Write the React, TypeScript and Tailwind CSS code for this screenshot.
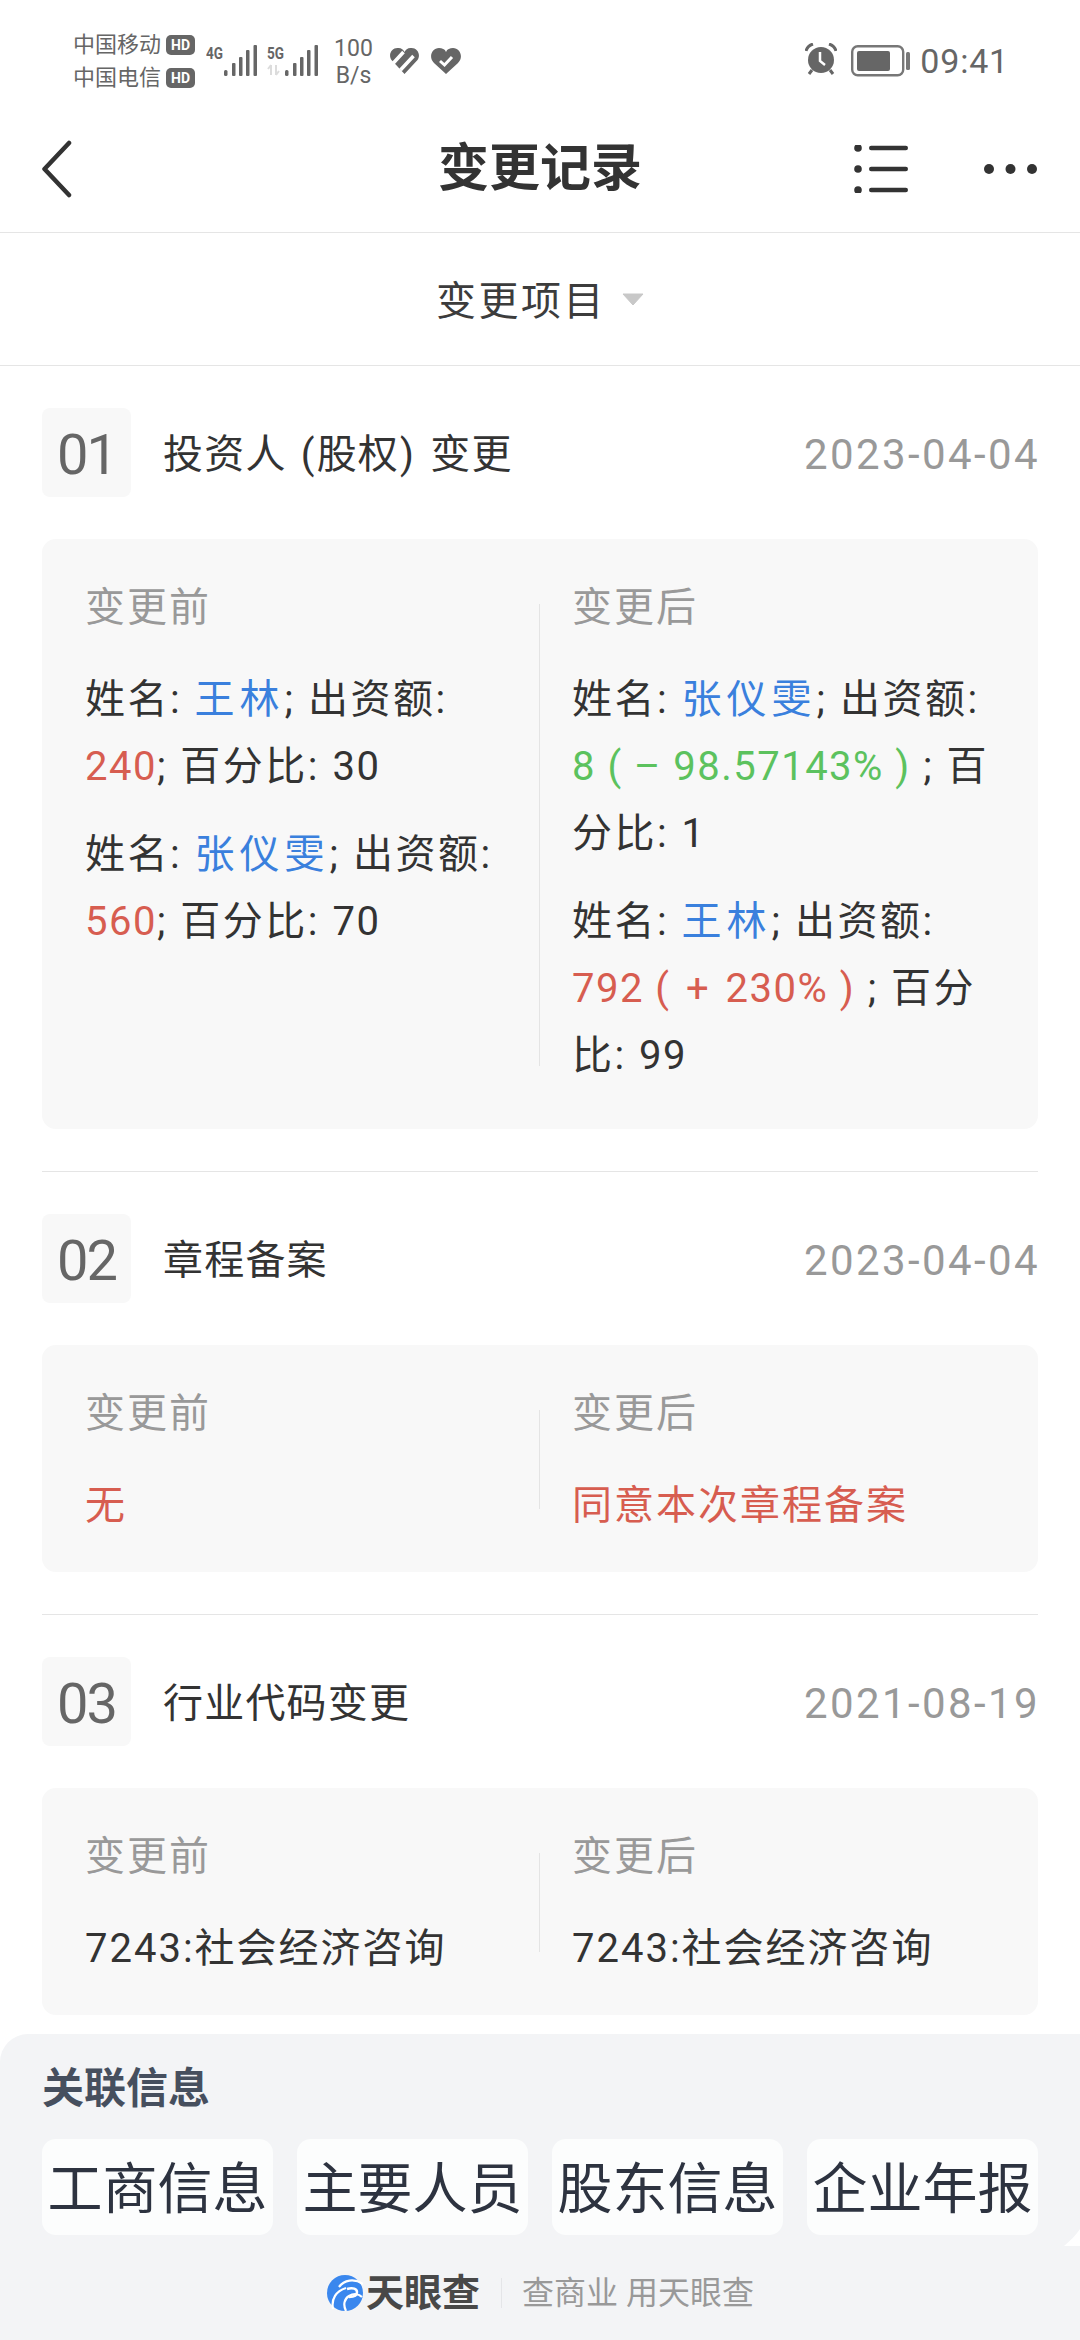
import type { ReactNode } from "react";

const Blue = ({ children }: { children: ReactNode }) => (
  <span className="text-[#3a80dd] tracking-[5px]">{children}</span>
);
const Red = ({ children }: { children: ReactNode }) => (
  <span className="text-[#d75d50] tracking-[1.5px]">{children}</span>
);
const Green = ({ children }: { children: ReactNode }) => (
  <span className="text-[#5cc25e] tracking-[1.5px]">{children}</span>
);
const Num = ({ children }: { children: ReactNode }) => (
  <span className="tracking-[1.5px]">{children}</span>
);

function Signal({ label, roaming }: { label: string; roaming?: boolean }) {
  return (
    <svg width="51" height="34" viewBox="0 0 51 34" className="shrink-0">
      <text x="0" y="16" fontSize="17" fontWeight="700" fill="#666" fontFamily="Roboto" textLength="17" lengthAdjust="spacingAndGlyphs">
        {label}
      </text>
      {roaming && (
        <g stroke="#dcdcdc" strokeWidth="2" fill="none">
          <path d="M4 32V22M1 26l3-4" />
          <path d="M9 22v10M9 32l3-4" />
        </g>
      )}
      <g fill="#666">
        <rect x="18" y="27" width="3.5" height="6" rx="1.5" />
        <rect x="26" y="20" width="3.5" height="13" rx="1" />
        <rect x="33" y="14" width="3.5" height="19" rx="1" />
        <rect x="40" y="7" width="3.5" height="26" rx="1" />
        <rect x="47.5" y="2" width="3.5" height="31" rx="1" />
      </g>
    </svg>
  );
}

function StatusBar() {
  return (
    <div className="h-[105px] pt-[28px] pl-[73px] pr-[71px] flex items-start text-[#666]">
      <div className="w-[122px] shrink-0 text-[22px] leading-[33px]">
        {["中国移动", "中国电信"].map((name) => (
          <div key={name} className="flex items-center">
            <span className="w-[93px]">{name}</span>
            <span className="w-[29px] h-[20px] rounded-[5px] bg-[#666] text-white text-[14px] leading-[20px] font-bold text-center">
              HD
            </span>
          </div>
        ))}
      </div>
      <div className="ml-[11px] mt-[15px] flex gap-[10px]">
        <Signal label="4G" />
        <Signal label="5G" roaming />
      </div>
      <div className="ml-[15px] mt-[7px] w-[41px] text-[23px] leading-[27px] text-center shrink-0 whitespace-nowrap">
        <div>100</div>
        <div>B/s</div>
      </div>
      <svg width="31" height="28" viewBox="0 0 30 28" className="ml-[15px] mt-[19px] shrink-0">
        <path d="M15 27 2 13C-2 7 3 0 9 1c3 0 5 2 6 4 1-2 3-4 6-4 6-1 11 6 7 12Z" fill="#666" />
        <path d="M3 17 14 5M11 23 24 9" stroke="#fff" strokeWidth="3.5" fill="none" />
      </svg>
      <svg width="30" height="26" viewBox="0 0 30 26" className="ml-[11px] mt-[20px] shrink-0">
        <path d="M15 26 3 15C-3 9 1 0 8 0c3 0 6 1 7 4 1-3 4-4 7-4 7 0 11 9 5 15Z" fill="#666" />
        <path d="m9 13 4.5 4L21 9" stroke="#fff" strokeWidth="3" fill="none" />
      </svg>
      <div className="flex-1" />
      <svg width="32" height="32" viewBox="0 0 32 32" className="mt-[15px] shrink-0">
        <circle cx="16" cy="17" r="13" fill="#666" />
        <path d="M1 8c1-4 4-6 7-7M31 8c-1-4-4-6-7-7" stroke="#666" strokeWidth="3" fill="none" />
        <path d="m7 27-3 4M25 27l3 4" stroke="#666" strokeWidth="3" />
        <path d="M15 9v9l5 4" stroke="#fff" strokeWidth="2.5" fill="none" />
      </svg>
      <svg width="59" height="32" viewBox="0 0 59 32" className="ml-[14px] mt-[17px] shrink-0">
        <rect x="1.2" y="1.2" width="51" height="29" rx="5.5" fill="none" stroke="#777" strokeWidth="2.4" />
        <rect x="6" y="6" width="33" height="20" rx="2" fill="#666" />
        <rect x="55" y="7" width="4" height="18" rx="1.5" fill="#777" />
      </svg>
      <div className="ml-[10px] text-[34px] leading-[40px] mt-[13px] tracking-[0.8px] shrink-0">09:41</div>
    </div>
  );
}

function Header() {
  return (
    <div className="h-[128px] px-[42px] grid grid-cols-[1fr_auto_1fr] items-center border-b border-[#e5e5e5]">
      <svg width="30" height="58" viewBox="0 0 30 58">
        <path d="M27 3 2.5 29 27 55" fill="none" stroke="#333" strokeWidth="4.5" strokeLinecap="round" strokeLinejoin="round" />
      </svg>
      <h1 className="text-[51px] leading-[64px] font-bold text-[#333]">变更记录</h1>
      <div className="flex items-center justify-end gap-[76px] pr-[1px]">
        <svg width="54" height="48" viewBox="0 0 54 48">
          <g fill="#333">
            <circle cx="4" cy="3" r="3.8" />
            <circle cx="4" cy="24" r="3.8" />
            <circle cx="4" cy="45" r="3.8" />
            <rect x="15" y="0.8" width="39" height="4.5" rx="2.2" />
            <rect x="15" y="21.8" width="39" height="4.5" rx="2.2" />
            <rect x="15" y="42.8" width="39" height="4.5" rx="2.2" />
          </g>
        </svg>
        <svg width="53" height="12" viewBox="0 0 53 12">
          <g fill="#333">
            <circle cx="5" cy="6" r="5" />
            <circle cx="26.5" cy="6" r="5" />
            <circle cx="48" cy="6" r="5" />
          </g>
        </svg>
      </div>
    </div>
  );
}

function Para({ children }: { children: ReactNode }) {
  return <p className="text-[40px] leading-[67px] text-[#333] tracking-[2.5px]">{children}</p>;
}

function Record({
  no,
  title,
  date,
  before,
  after,
  tall,
  last,
}: {
  no: string;
  title: ReactNode;
  date: string;
  before: ReactNode;
  after: ReactNode;
  tall?: boolean;
  last?: boolean;
}) {
  return (
    <section className={last ? "mx-[42px] pt-[42px]" : "mx-[42px] pt-[42px] pb-[42px] border-b border-[#e5e5e5]"}>
      <div className="flex items-center h-[89px]">
        <div className="w-[89px] h-[89px] pt-[4px] rounded-[8px] bg-[#f8f8f8] flex items-center justify-center text-[56px] tracking-[-2px] text-[#666]">
          {no}
        </div>
        <div className="ml-[32px] mt-[5px] text-[40px] text-[#333] tracking-[1.2px] flex-1">{title}</div>
        <div className="mt-[3px] text-[42px] tracking-[2.4px] text-[#999] -mr-[2px]">{date}</div>
      </div>
      <div className={tall ? "mt-[42px] bg-[#f8f8f8] rounded-[14px] flex pt-[35px] pb-[40px]" : "mt-[42px] bg-[#f8f8f8] rounded-[14px] flex pt-[35px] pb-[33px]"}>
        <div className="w-[497px] shrink-0 pl-[43px] pr-[32px]">
          <div className="text-[40px] leading-[67px] text-[#999] tracking-[2px] mb-[25px]">变更前</div>
          {before}
        </div>
        <div className={tall ? "w-px shrink-0 mt-[30px] mb-[23px] bg-[#e4e4e4]" : "w-px shrink-0 mt-[30px] mb-[30px] bg-[#e4e4e4]"} />
        <div className="flex-1 pl-[32px] pr-[35px]">
          <div className="text-[40px] leading-[67px] text-[#999] tracking-[2px] mb-[25px]">变更后</div>
          {after}
        </div>
      </div>
    </section>
  );
}

function RelatedSheet() {
  return (
    <div className="relative flex-1 mt-[19px] bg-[#f3f4f6] rounded-tl-[28px] px-[42px] pt-[27px]">
      <div className="text-[42px] leading-[56px] font-bold text-[#464f5e]">关联信息</div>
      <div className="mt-[22px] grid grid-cols-4 gap-[24px]">
        {["工商信息", "主要人员", "股东信息", "企业年报"].map((name) => (
          <div
            key={name}
            className="h-[96px] pt-[5px] rounded-[14px] bg-[#fcfdfd] flex items-center justify-center text-[55px] text-[#2d3340] whitespace-nowrap"
          >
            {name}
          </div>
        ))}
      </div>
      <div className="mt-[38px] flex items-center justify-center pl-[1px]">
        <svg width="36" height="36" viewBox="0 0 36 36" className="shrink-0">
          <circle cx="18" cy="18" r="18" fill="#3a87ee" />
          <path d="M36 9C27 3 17 5 12 12M6 34C4 24 9 16 19 13M19 36c-3-6-2-12 3-15 5-3 10-2 13 1" fill="none" stroke="#fff" strokeWidth="2.2" />
          <path d="M20 14c6-2 10 0 10 3s-3 5-8 5" fill="none" stroke="#fff" strokeWidth="2.5" />
        </svg>
        <span className="ml-[3px] text-[38px] leading-[40px] font-bold text-[#484848]">天眼查</span>
        <span className="ml-[21px] w-px h-[30px] bg-[#e4e5e8]" />
        <span className="ml-[20px] text-[32px] leading-[40px] text-[#999]">查商业 用天眼查</span>
      </div>
      {/* white nick at the sheet's right edge */}
      <svg width="16" height="17" viewBox="0 0 16 17" className="absolute right-0 top-[195px]">
        <path d="M16 0C12 6 6 12 0 17h16Z" fill="#fff" />
      </svg>
    </div>
  );
}

export default function App() {
  return (
    <div lang="zh-CN" className="w-[1080px] h-[2340px] overflow-hidden bg-white flex flex-col font-['Roboto','Noto_Sans_CJK_SC',sans-serif]">
      <StatusBar />
      <Header />
      <div className="h-[133px] flex items-center justify-center border-b border-[#e5e5e5]">
        <span className="mt-[6px] text-[40px] text-[#3c3c3c] tracking-[2.5px]">变更项目</span>
        <svg width="22" height="13" viewBox="0 0 22 13" className="ml-[16px]">
          <path d="M1 1h20L11 12Z" fill="#c8c8c8" stroke="#c8c8c8" strokeWidth="1" strokeLinejoin="round" />
        </svg>
      </div>

      <Record
        no="01"
        title={
          <>
            投资人<span className="ml-[3px] mr-[1px]"> (</span>股权<span className="ml-[1px] mr-[4px]">) </span>变更
          </>
        }
        date="2023-04-04"
        tall
        before={
          <div className="flex flex-col gap-[21px]">
            <Para>
              姓名: <Blue>王林</Blue>; 出资额: <Red>240</Red>; 百分比: <Num>30</Num>
            </Para>
            <Para>
              姓名: <Blue>张仪雯</Blue>; 出资额: <Red>560</Red>; 百分比: <Num>70</Num>
            </Para>
          </div>
        }
        after={
          <div className="flex flex-col gap-[21px]">
            <Para>
              姓名: <Blue>张仪雯</Blue>; 出资额: <Green>8 ( – 98.57143% )</Green> ; 百分比: <Num>1</Num>
            </Para>
            <Para>
              姓名: <Blue>王林</Blue>; 出资额: <Red>792 ( <span className="mx-[4px]">+</span> 230% )</Red> ; 百分比: <Num>99</Num>
            </Para>
          </div>
        }
      />
      <Record
        no="02"
        title="章程备案"
        date="2023-04-04"
        before={<p className="text-[40px] leading-[67px] text-[#d75d50] tracking-[2px]">无</p>}
        after={<p className="text-[40px] leading-[67px] text-[#d75d50] tracking-[2px]">同意本次章程备案</p>}
      />
      <Record
        no="03"
        title="行业代码变更"
        date="2021-08-19"
        last
        before={<p className="text-[40px] leading-[67px] text-[#333] tracking-[2px]">7243:社会经济咨询</p>}
        after={<p className="text-[40px] leading-[67px] text-[#333] tracking-[2px]">7243:社会经济咨询</p>}
      />
      <RelatedSheet />
    </div>
  );
}
